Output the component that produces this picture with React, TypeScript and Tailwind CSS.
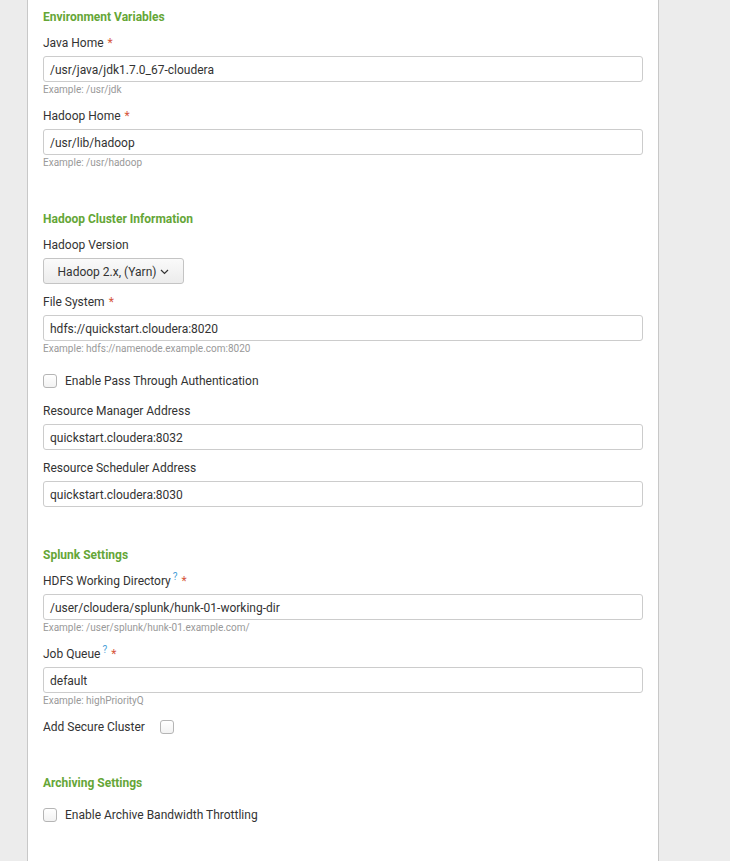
import React from "react";

const font = { fontFamily: "Roboto, 'Liberation Sans', sans-serif" };

function Heading({ children }: { children: React.ReactNode }) {
  return <div className="text-[12px] leading-[18px] font-bold text-[#65a637]">{children}</div>;
}

function Label({ text, required, help }: { text: string; required?: boolean; help?: boolean }) {
  return (
    <div className="text-[12px] leading-[18px] text-[#333]">
      {text}
      {help && <sup className="text-[10px] text-[#4a9fd8] ml-[2px]">?</sup>}
      {required && <span className="text-[#d6563c] ml-[4px]">*</span>}
    </div>
  );
}

function Field({ label, value, example, required, help }: { label: string; value: string; example?: string; required?: boolean; help?: boolean }) {
  return (
    <div className="flex flex-col">
      <Label text={label} required={required} help={help} />
      <div className="mt-[4px] w-[600px] h-[26px] border border-[#cccccc] rounded-[3px] bg-white pl-[6px] pt-[2px] flex items-center text-[12px] leading-[18px] text-[#333]">
        {value}
      </div>
      {example && <div className="text-[10px] leading-[16px] text-[#999]">{example}</div>}
    </div>
  );
}

function Checkbox() {
  return (
    <div className="w-[14px] h-[14px] rounded-[3px] border border-[#b5b5b5] bg-gradient-to-b from-white to-[#f2f2f2] shrink-0" />
  );
}

function CheckRow({ label }: { label: string }) {
  return (
    <div className="mt-[6px] mb-[3px] flex items-center gap-[8px] h-[18px] text-[12px] leading-[18px] text-[#333]">
      <Checkbox />
      <span>{label}</span>
    </div>
  );
}

function Section({ title, children, className = "" }: { title: string; children: React.ReactNode; className?: string }) {
  return (
    <section className={`flex flex-col ${className}`}>
      <Heading>{title}</Heading>
      <div className="mt-[8px] flex flex-col gap-[9px]">{children}</div>
    </section>
  );
}

export default function App() {
  return (
    <div style={font} className="w-[730px] h-[861px] bg-[#ececec] overflow-hidden">
      <div className="ml-[27px] w-[632px] min-h-[861px] bg-white border-l border-r border-[#c8c8c8] pl-[15px] pt-[8px] flex flex-col gap-[39px]">
        <Section title="Environment Variables">
          <Field label="Java Home" required value="/usr/java/jdk1.7.0_67-cloudera" example="Example: /usr/jdk" />
          <Field label="Hadoop Home" required value="/usr/lib/hadoop" example="Example: /usr/hadoop" />
        </Section>

        <Section title="Hadoop Cluster Information">
          <div className="flex flex-col">
            <Label text="Hadoop Version" />
            <div className="mt-[4px] w-[141px] h-[26px] border border-[#c4c4c4] rounded-[3px] bg-gradient-to-b from-[#fafafa] to-[#ececec] pt-[2px] flex items-center justify-center gap-[4px] text-[12px] leading-[18px] text-[#333]">
              <span>Hadoop 2.x, (Yarn)</span>
              <svg width="9" height="6" viewBox="0 0 9 6" fill="none">
                <path d="M1 1l3.5 3.5L8 1" stroke="#333" strokeWidth="1.2" />
              </svg>
            </div>
          </div>
          <Field label="File System" required value="hdfs://quickstart.cloudera:8020" example="Example: hdfs://namenode.example.com:8020" />
          <CheckRow label="Enable Pass Through Authentication" />
          <Field label="Resource Manager Address" value="quickstart.cloudera:8032" />
          <Field label="Resource Scheduler Address" value="quickstart.cloudera:8030" />
        </Section>

        <Section title="Splunk Settings">
          <Field label="HDFS Working Directory" help required value="/user/cloudera/splunk/hunk-01-working-dir" example="Example: /user/splunk/hunk-01.example.com/" />
          <Field label="Job Queue" help required value="default" example="Example: highPriorityQ" />
          <div className="flex items-center gap-[15px] h-[18px] text-[12px] leading-[18px] text-[#333]">
            <span>Add Secure Cluster</span>
            <Checkbox />
          </div>
        </Section>

        <Section title="Archiving Settings" className="-mt-[1px]">
          <CheckRow label="Enable Archive Bandwidth Throttling" />
        </Section>
      </div>
    </div>
  );
}
